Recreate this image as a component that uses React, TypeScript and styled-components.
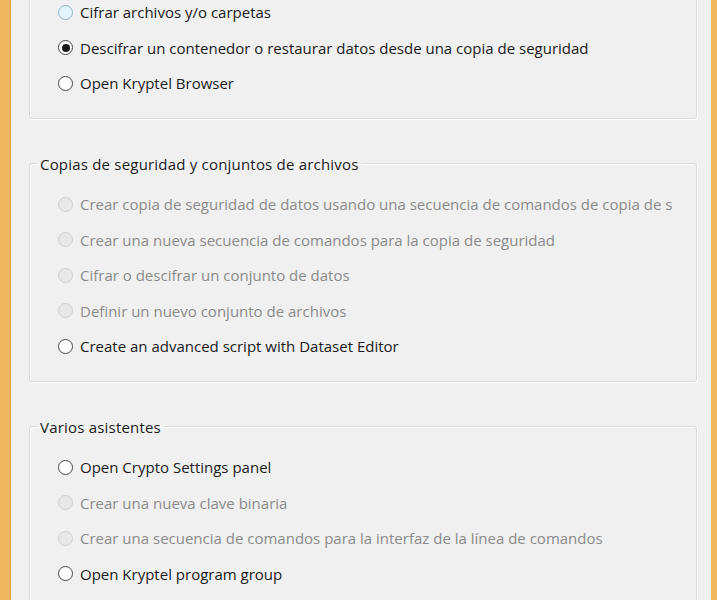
import React from "react";
import styled, { createGlobalStyle, css } from "styled-components";

const GlobalStyle = createGlobalStyle`
  html, body {
    margin: 0;
    padding: 0;
    background: #f0f0f0;
    overflow: hidden;
  }
`;

type RadioState = "normal" | "hover" | "checked" | "disabled";

interface Option {
  label: string;
  state: RadioState;
}

interface Group {
  title?: string;
  options: Option[];
}

const groups: Group[] = [
  {
    options: [
      { label: "Cifrar archivos y/o carpetas", state: "hover" },
      { label: "Descifrar un contenedor o restaurar datos desde una copia de seguridad", state: "checked" },
      { label: "Open Kryptel Browser", state: "normal" },
    ],
  },
  {
    title: "Copias de seguridad y conjuntos de archivos",
    options: [
      { label: "Crear copia de seguridad de datos usando una secuencia de comandos de copia de seguridad", state: "disabled" },
      { label: "Crear una nueva secuencia de comandos para la copia de seguridad", state: "disabled" },
      { label: "Cifrar o descifrar un conjunto de datos", state: "disabled" },
      { label: "Definir un nuevo conjunto de archivos", state: "disabled" },
      { label: "Create an advanced script with Dataset Editor", state: "normal" },
    ],
  },
  {
    title: "Varios asistentes",
    options: [
      { label: "Open Crypto Settings panel", state: "normal" },
      { label: "Crear una nueva clave binaria", state: "disabled" },
      { label: "Crear una secuencia de comandos para la interfaz de la línea de comandos", state: "disabled" },
      { label: "Open Kryptel program group", state: "normal" },
    ],
  },
];

export default function App() {
  return (
    <>
      <GlobalStyle />
      <Window>
        <Content>
          {groups.map((group, i) => (
            <GroupBox key={i} $clipped={!group.title}>
              {group.title && <Legend>{group.title}</Legend>}
              <Rows>
                {group.options.map((opt) => (
                  <Row key={opt.label} $disabled={opt.state === "disabled"}>
                    <Radio $state={opt.state} />
                    <Label>{opt.label}</Label>
                  </Row>
                ))}
              </Rows>
            </GroupBox>
          ))}
        </Content>
      </Window>
    </>
  );
}

const Window = styled.div`
  display: flex;
  height: 600px;
  border-left: 10px solid #efb65f;
  border-right: 6px solid #efb65f;
  font-family: "Open Sans", "Noto Sans", sans-serif;
  font-size: 15px;
`;

const Content = styled.div`
  flex: 1;
  display: flex;
  flex-direction: column;
  gap: 35px;
  padding: 0 14px 0 18px;
  border-left: 1px solid #d9a04e;
  background: #f0f0f0;
  overflow: hidden;
`;

const GroupBox = styled.fieldset<{ $clipped: boolean }>`
  margin: 0;
  padding: 14.5px 0 17px 0;
  border: 1px solid #dcdcdc;
  border-radius: 3px;
  box-shadow: 1px 1px 0 #ffffff, inset 1px 1px 0 #ffffff;
  min-width: 0;
  ${({ $clipped }) =>
    $clipped &&
    css`
      margin-top: -21px;
      padding-bottom: 17px;
    `}
`;

const Legend = styled.legend`
  margin-left: 7px;
  padding: 0 3px;
  line-height: 18px;
  letter-spacing: 0.2px;
  color: #1b1b1b;
  position: relative;
  top: 1px;
`;

const Rows = styled.div`
  display: flex;
  flex-direction: column;
  padding: 0 24px 0 28px;
`;

const Row = styled.div<{ $disabled: boolean }>`
  display: flex;
  align-items: center;
  gap: 7px;
  height: 35.5px;
  white-space: nowrap;
  overflow: hidden;
  color: ${({ $disabled }) => ($disabled ? "#8b8b8b" : "#1b1b1b")};
`;

const Label = styled.span`
  line-height: 18px;
`;

const radioLook = {
  normal: css`
    border-color: #444444;
    background: #ffffff;
  `,
  hover: css`
    border-color: #8fb6cf;
    background: #e3f4fc;
  `,
  checked: css`
    border-color: #444444;
    background: #ffffff;
    &::after {
      content: "";
      width: 8px;
      height: 8px;
      border-radius: 50%;
      background: #1a1a1a;
    }
  `,
  disabled: css`
    border-color: #cfcfcf;
    background: #e8e8e8;
  `,
};

const Radio = styled.span<{ $state: RadioState }>`
  flex: none;
  box-sizing: border-box;
  width: 15px;
  height: 15px;
  border: 1px solid;
  border-radius: 50%;
  display: flex;
  align-items: center;
  justify-content: center;
  ${({ $state }) => radioLook[$state]}
`;
